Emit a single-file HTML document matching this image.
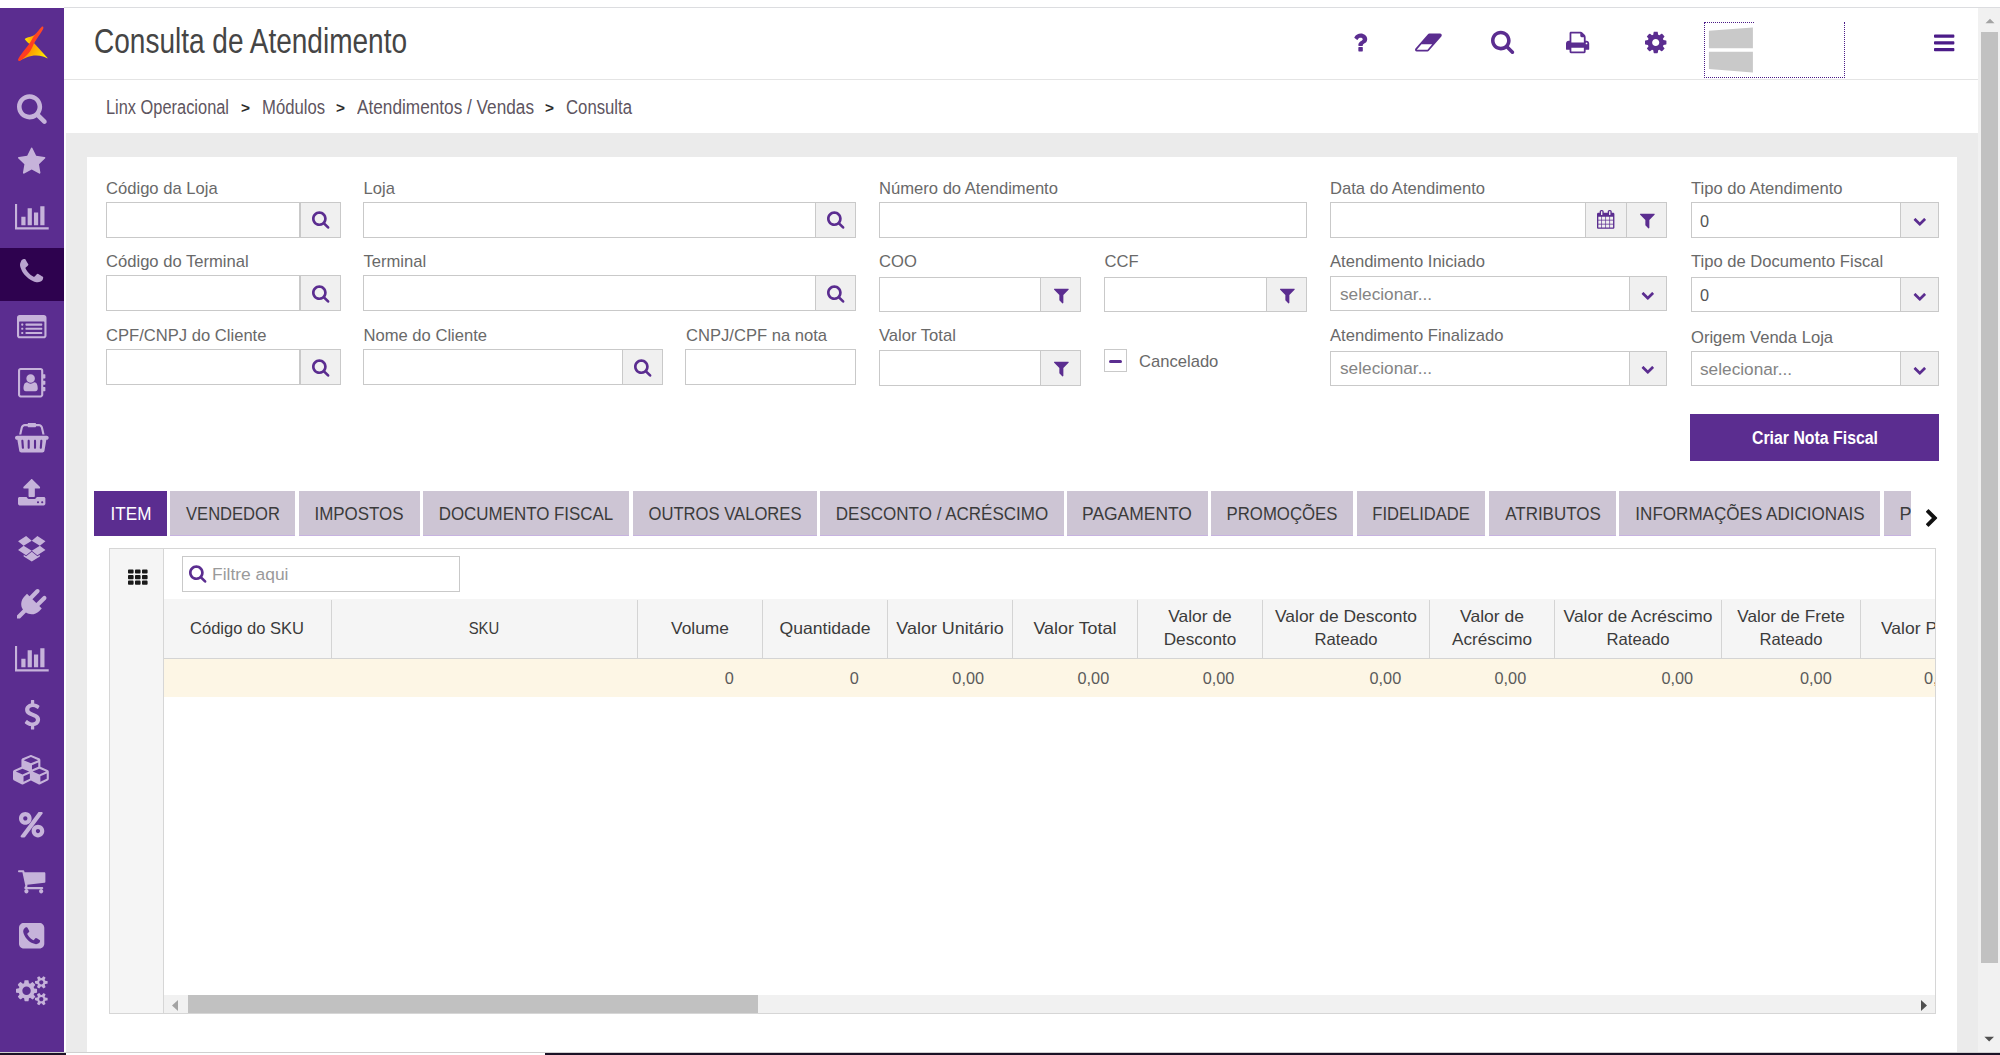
<!DOCTYPE html>
<html lang="pt-BR"><head><meta charset="utf-8"><title>Consulta de Atendimento</title>
<style>
*{box-sizing:border-box;margin:0;padding:0}
html,body{width:2000px;height:1055px;overflow:hidden;background:#fff;font-family:"Liberation Sans",sans-serif;}
body{position:relative}
.abs,.t,.ic,.bx{position:absolute}
.t{white-space:nowrap;line-height:1;transform-origin:0 50%;display:block}
.ic{display:block;overflow:visible}
.lbl{color:#696969;font-size:16.6px}
.inp{position:absolute;background:#fff;border:1px solid #c9c9c9;height:35px}
.btn{position:absolute;background:#f0f0f0;border:1px solid #c9c9c9;height:35px}
.tab{position:absolute;top:491px;height:44.8px;background:#cdc5d4;border-bottom:1.6px solid #c7b3e0}
.tab.on{background:#5b2d90;border-bottom-color:#5b2d90}
.th{position:absolute;top:600px;height:57px;border-left:1px solid #d4d4d4}
</style></head><body>

<div class="bx" style="left:64px;top:7px;width:1936px;height:1px;background:#dcdde0"></div>
<div class="bx" style="left:0;top:8px;width:64px;height:1045px;background:#5b2d90"></div>
<div class="bx" style="left:0;top:247.5px;width:64px;height:53.7px;background:#2e024f"></div>
<svg class="ic" style="left:8px;top:16px;width:48px;height:56px" viewBox="0 0 48 56">
<defs><linearGradient id="lg1" x1="0" y1="1" x2="1" y2="0"><stop offset="0" stop-color="#ff3a22"/><stop offset="0.5" stop-color="#ff3d20"/><stop offset="1" stop-color="#ff4a26"/></linearGradient>
<linearGradient id="lg2" x1="0" y1="0" x2="1" y2="0"><stop offset="0" stop-color="#ffe600"/><stop offset="0.6" stop-color="#ffb000"/><stop offset="1" stop-color="#ff6a10"/></linearGradient>
<linearGradient id="lg3" x1="0" y1="0" x2="1" y2="0.35"><stop offset="0" stop-color="#ff4a18"/><stop offset="0.35" stop-color="#ff8a00"/><stop offset="0.8" stop-color="#ffc400"/><stop offset="1" stop-color="#ffe800"/></linearGradient></defs>
<path d="M16.7 22.9 C18.5 21.3 22 20.9 24.5 19.9 C26 19.2 27 18.5 28 17.4 L26 27.5 L22 28 C20.2 27 18 25 16.7 22.9Z" fill="url(#lg2)"/>
<path d="M25.5 26.5 L39.8 42.2 C38.5 42.6 37.5 41.4 35 40.6 C30 39 24 39.4 19 41.2 C16 42.4 13.5 43.8 11.5 44.6 L22 33Z" fill="url(#lg3)"/>
<path d="M34.6 10.6 C35.6 10.8 35.6 12.2 35 13.2 C32.5 17.5 28.5 23 26 27.3 C24.8 30 24 32.5 22 35.5 C19.5 39 15.5 42.5 12.3 44.7 C11 45.4 9.8 44.6 10.1 43.2 C12 39.5 17 33.5 21 28.2 C23 25.5 24.5 22 26.5 19.5 C29 16 32 12.6 33.6 10.9 C33.9 10.6 34.3 10.5 34.6 10.6Z" fill="url(#lg1)"/>
</svg>
<svg class="ic" style="left:17.14px;top:91.80px;width:29.71px;height:32.00px;" viewBox="0 0 1664 1792"><path fill="#c6b3da" d="M1152 832C1152 1079 951 1280 704 1280C457 1280 256 1079 256 832C256 585 457 384 704 384C951 384 1152 585 1152 832ZM1664 1664C1664 1630 1650 1597 1627 1574L1284 1231C1365 1114 1408 974 1408 832C1408 443 1093 128 704 128C315 128 0 443 0 832C0 1221 315 1536 704 1536C846 1536 986 1493 1103 1412L1446 1754C1469 1778 1502 1792 1536 1792C1606 1792 1664 1734 1664 1664Z"/></svg>
<svg class="ic" style="left:18.30px;top:146.60px;width:27.39px;height:29.50px;" viewBox="0 0 1664 1792"><path fill="#c6b3da" d="M1664 647C1664 617 1632 605 1608 601L1106 528L881 73C872 54 855 32 832 32C809 32 792 54 783 73L558 528L56 601C31 605 0 617 0 647C0 665 13 682 25 695L389 1049L303 1549C302 1556 301 1562 301 1569C301 1595 314 1619 343 1619C357 1619 370 1614 383 1607L832 1371L1281 1607C1293 1614 1307 1619 1321 1619C1350 1619 1362 1595 1362 1569C1362 1562 1362 1556 1361 1549L1275 1049L1638 695C1651 682 1664 665 1664 647Z"/></svg>
<svg class="ic" style="left:15.14px;top:201.90px;width:33.71px;height:29.50px;" viewBox="0 0 2048 1792"><path fill="#c6b3da" d="M640 896H384V1408H640ZM1024 384H768V1408H1024ZM2048 1536H128V128H0V1664H2048ZM1408 640H1152V1408H1408ZM1792 256H1536V1408H1792Z"/></svg>
<svg class="ic" style="left:20.41px;top:257.20px;width:23.18px;height:29.50px;" viewBox="0 0 1408 1792"><path fill="#b9a4cf" d="M1408 1240C1408 1233 1408 1226 1405 1219C1398 1198 1349 1176 1329 1166C1272 1134 1214 1103 1158 1070C1132 1054 1100 1024 1069 1024C1008 1024 919 1205 865 1205C838 1205 803 1180 779 1166C597 1065 471 939 370 757C356 733 331 698 331 671C331 617 512 528 512 467C512 436 482 404 466 378C433 322 402 264 370 207C360 187 338 138 317 131C310 128 303 128 296 128C260 128 190 144 157 159C108 180 76 236 51 281C19 340 0 400 0 467C0 560 38 644 69 729C91 790 118 849 152 904C257 1074 462 1279 632 1384C687 1418 746 1445 807 1467C892 1498 976 1536 1069 1536C1136 1536 1196 1517 1255 1485C1300 1460 1356 1428 1377 1379C1392 1346 1408 1276 1408 1240Z"/></svg>
<svg class="ic" style="left:17.25px;top:312.50px;width:29.50px;height:29.50px;" viewBox="0 0 1792 1792"><path fill="#c6b3da" d="M384 1184C384 1167 369 1152 352 1152H288C271 1152 256 1167 256 1184V1248C256 1265 271 1280 288 1280H352C369 1280 384 1265 384 1248ZM384 928C384 911 369 896 352 896H288C271 896 256 911 256 928V992C256 1009 271 1024 288 1024H352C369 1024 384 1009 384 992ZM384 672C384 655 369 640 352 640H288C271 640 256 655 256 672V736C256 753 271 768 288 768H352C369 768 384 753 384 736ZM1536 1184C1536 1167 1521 1152 1504 1152H544C527 1152 512 1167 512 1184V1248C512 1265 527 1280 544 1280H1504C1521 1280 1536 1265 1536 1248ZM1536 928C1536 911 1521 896 1504 896H544C527 896 512 911 512 928V992C512 1009 527 1024 544 1024H1504C1521 1024 1536 1009 1536 992ZM1536 672C1536 655 1521 640 1504 640H544C527 640 512 655 512 672V736C512 753 527 768 544 768H1504C1521 768 1536 753 1536 736ZM1664 1376C1664 1393 1649 1408 1632 1408H160C143 1408 128 1393 128 1376V544C128 527 143 512 160 512H1632C1649 512 1664 527 1664 544V1376ZM1792 288C1792 200 1720 128 1632 128H160C72 128 0 200 0 288V1376C0 1464 72 1536 160 1536H1632C1720 1536 1792 1464 1792 1376Z"/></svg>
<svg class="ic" style="left:18.30px;top:367.80px;width:27.39px;height:29.50px;" viewBox="0 0 1664 1792"><path fill="#c6b3da" d="M1028 644C1028 500 911 384 768 384C625 384 508 500 508 644C508 787 625 903 768 903C911 903 1028 787 1028 644ZM980 864C914 903 847 951 768 951C689 951 622 903 556 864H551C365 864 335 1097 335 1238C335 1322 388 1408 480 1408H1056C1148 1408 1201 1322 1201 1238C1201 1091 1171 864 980 864ZM1664 608V416C1664 399 1649 384 1632 384H1536V160C1536 72 1464 0 1376 0H160C72 0 0 72 0 160V1632C0 1720 72 1792 160 1792H1376C1464 1792 1536 1720 1536 1632V1408H1632C1649 1408 1664 1393 1664 1376V1184C1664 1167 1649 1152 1632 1152H1536V1024H1632C1649 1024 1664 1009 1664 992V800C1664 783 1649 768 1632 768H1536V640H1632C1649 640 1664 625 1664 608ZM1408 1632C1408 1649 1393 1664 1376 1664H160C143 1664 128 1649 128 1632V160C128 143 143 128 160 128H1376C1393 128 1408 143 1408 160Z"/></svg>
<svg class="ic" style="left:15.14px;top:423.10px;width:33.71px;height:29.50px;" viewBox="0 0 2048 1792"><path fill="#c6b3da" d="M1920 768H128C57 768 0 825 0 896C0 967 57 1024 128 1024H143L258 1686C269 1747 322 1792 384 1792H1664C1726 1792 1779 1747 1790 1686L1905 1024H1920C1991 1024 2048 967 2048 896C2048 825 1991 768 1920 768ZM485 1568C483 1568 482 1568 480 1568C447 1568 419 1542 416 1509L384 1093C381 1058 408 1027 443 1024C478 1021 509 1048 512 1083L544 1499C547 1534 520 1565 485 1568ZM896 1504C896 1539 867 1568 832 1568C797 1568 768 1539 768 1504V1088C768 1053 797 1024 832 1024C867 1024 896 1053 896 1088ZM1280 1504C1280 1539 1251 1568 1216 1568C1181 1568 1152 1539 1152 1504V1088C1152 1053 1181 1024 1216 1024C1251 1024 1280 1053 1280 1088ZM1632 1509C1629 1542 1601 1568 1568 1568C1566 1568 1565 1568 1563 1568C1528 1565 1501 1534 1504 1499L1536 1083C1539 1048 1570 1021 1605 1024C1640 1027 1667 1058 1664 1093ZM476 292C490 233 541 192 601 192H768C768 227 797 256 832 256H1216C1251 256 1280 227 1280 192H1447C1507 192 1558 233 1572 292L1665 704H1797L1696 263C1670 146 1567 64 1447 64H1280C1280 29 1251 0 1216 0H832C797 0 768 29 768 64H601C481 64 378 146 352 263L251 704H383Z"/></svg>
<svg class="ic" style="left:18.30px;top:478.40px;width:27.39px;height:29.50px;" viewBox="0 0 1664 1792"><path fill="#c6b3da" d="M1280 1472C1280 1507 1251 1536 1216 1536C1181 1536 1152 1507 1152 1472C1152 1437 1181 1408 1216 1408C1251 1408 1280 1437 1280 1472ZM1536 1472C1536 1507 1507 1536 1472 1536C1437 1536 1408 1507 1408 1472C1408 1437 1437 1408 1472 1408C1507 1408 1536 1437 1536 1472ZM1664 1248C1664 1195 1621 1152 1568 1152H1141C1114 1226 1043 1280 960 1280H704C621 1280 550 1226 523 1152H96C43 1152 0 1195 0 1248V1568C0 1621 43 1664 96 1664H1568C1621 1664 1664 1621 1664 1568ZM1339 600C1349 577 1344 549 1325 531L877 83C865 70 848 64 832 64C816 64 799 70 787 83L339 531C320 549 315 577 325 600C335 624 358 640 384 640H640V1088C640 1123 669 1152 704 1152H960C995 1152 1024 1123 1024 1088V640H1280C1306 640 1329 624 1339 600Z"/></svg>
<svg class="ic" style="left:17.25px;top:533.70px;width:29.50px;height:29.50px;" viewBox="0 0 1792 1792"><path fill="#c6b3da" d="M402 707 64 978 554 1297 896 1012ZM1388 1262 1241 1358 898 1074V1072L897 1073L896 1072V1074L554 1358L407 1262V1370L896 1663V1664L897 1663L898 1664V1663L1388 1370ZM554 118 64 437 402 707 896 403ZM1390 707 896 1012 1239 1297 1728 978ZM1239 118 896 403 1390 707 1728 437Z"/></svg>
<svg class="ic" style="left:17.25px;top:589.00px;width:29.50px;height:29.50px;" viewBox="0 0 1792 1792"><path fill="#c6b3da" d="M1755 453C1705 403 1624 403 1574 453L1173 853L939 619L1339 218C1389 169 1389 87 1339 37C1289 -12 1208 -12 1158 37L758 438L608 288L448 448C229 667 198 1001 362 1249L0 1611V1792H181L543 1430C791 1594 1125 1563 1344 1344L1504 1184L1354 1034L1755 634C1804 584 1804 503 1755 453Z"/></svg>
<svg class="ic" style="left:15.14px;top:644.30px;width:33.71px;height:29.50px;" viewBox="0 0 2048 1792"><path fill="#c6b3da" d="M640 896H384V1408H640ZM1024 384H768V1408H1024ZM2048 1536H128V128H0V1664H2048ZM1408 640H1152V1408H1408ZM1792 256H1536V1408H1792Z"/></svg>
<svg class="ic" style="left:23.57px;top:699.60px;width:16.86px;height:29.50px;" viewBox="0 0 1024 1792"><path fill="#c6b3da" d="M978 1185C978 944 770 863 586 792C444 737 322 690 322 584C322 493 410 430 537 430C687 430 808 537 809 538C817 544 826 547 836 545C846 544 854 538 859 529L940 383C947 371 945 356 935 345C931 341 823 231 620 208V32C620 14 606 0 588 0H453C436 0 421 14 421 32V212C212 252 68 404 68 588C68 839 292 929 472 1000C607 1054 725 1101 725 1197C725 1310 619 1362 521 1362C344 1362 204 1228 202 1227C196 1220 187 1217 178 1218C169 1219 160 1223 155 1230L52 1365C43 1377 44 1394 54 1406C59 1412 187 1552 421 1585V1760C421 1778 436 1792 453 1792H588C606 1792 620 1778 620 1760V1585C832 1550 978 1389 978 1185Z"/></svg>
<svg class="ic" style="left:13.04px;top:754.90px;width:37.93px;height:29.50px;" viewBox="0 0 2304 1792"><path fill="#c6b3da" d="M640 1632V1290L1024 1126V1440ZM576 1178 172 1005 576 832 980 1005ZM1664 1632V1290L2048 1126V1440ZM1600 1178 1196 1005 1600 832 2004 1005ZM1152 885V618L1536 454V720ZM1088 506 647 317 1088 128 1529 317ZM2176 1024C2176 973 2146 927 2098 906L1664 720V320C1664 269 1633 223 1586 202L1138 10C1122 3 1105 0 1088 0C1071 0 1054 3 1038 10L590 202C543 223 512 269 512 320V720L78 906C31 927 0 973 0 1024V1440C0 1488 27 1533 71 1554L519 1778C537 1788 556 1792 576 1792C596 1792 615 1788 633 1778L1081 1554C1084 1553 1086 1552 1088 1550C1090 1552 1092 1553 1095 1554L1543 1778C1561 1788 1580 1792 1600 1792C1620 1792 1639 1788 1657 1778L2105 1554C2149 1533 2176 1488 2176 1440Z"/></svg>
<svg class="ic" style="left:19.36px;top:810.20px;width:25.29px;height:29.50px;" viewBox="0 0 1536 1792"><path fill="#c6b3da" d="M1280 1280C1280 1350 1222 1408 1152 1408C1082 1408 1024 1350 1024 1280C1024 1210 1082 1152 1152 1152C1222 1152 1280 1210 1280 1280ZM512 512C512 582 454 640 384 640C314 640 256 582 256 512C256 442 314 384 384 384C454 384 512 442 512 512ZM1536 1280C1536 1068 1364 896 1152 896C940 896 768 1068 768 1280C768 1492 940 1664 1152 1664C1364 1664 1536 1492 1536 1280ZM1440 192C1440 157 1411 128 1376 128H1216C1196 128 1177 138 1165 154L109 1562C101 1573 96 1586 96 1600C96 1635 125 1664 160 1664H320C340 1664 359 1654 371 1638L1427 230C1435 219 1440 206 1440 192ZM768 512C768 300 596 128 384 128C172 128 0 300 0 512C0 724 172 896 384 896C596 896 768 724 768 512Z"/></svg>
<svg class="ic" style="left:18.30px;top:865.50px;width:27.39px;height:29.50px;" viewBox="0 0 1664 1792"><path fill="#c6b3da" d="M640 1536C640 1466 582 1408 512 1408C442 1408 384 1466 384 1536C384 1606 442 1664 512 1664C582 1664 640 1606 640 1536ZM1536 1536C1536 1466 1478 1408 1408 1408C1338 1408 1280 1466 1280 1536C1280 1606 1338 1664 1408 1664C1478 1664 1536 1606 1536 1536ZM1664 448C1664 413 1635 384 1600 384H399C389 336 387 256 320 256H64C29 256 0 285 0 320C0 355 29 384 64 384H268L445 1207C429 1238 384 1313 384 1344C384 1379 413 1408 448 1408H1472C1507 1408 1536 1379 1536 1344C1536 1309 1507 1280 1472 1280H552C562 1260 576 1239 576 1216C576 1192 568 1169 563 1146L1607 1024C1639 1020 1664 992 1664 960Z"/></svg>
<svg class="ic" style="left:19.36px;top:920.80px;width:25.29px;height:29.50px;" viewBox="0 0 1536 1792"><path fill="#c6b3da" d="M1280 1193C1280 1219 1268 1270 1258 1294C1228 1360 1102 1408 1033 1408C966 1408 905 1381 843 1358C624 1278 386 1040 306 821C283 759 256 698 256 631C256 562 304 436 370 406C394 396 445 384 471 384C476 384 482 384 487 386C505 392 579 538 595 566C606 585 628 608 628 631C628 675 497 740 497 779C497 799 515 824 525 842C599 974 690 1065 822 1139C840 1149 865 1167 885 1167C924 1167 989 1036 1033 1036C1056 1036 1079 1058 1098 1069C1126 1085 1272 1159 1278 1177C1280 1182 1280 1188 1280 1193ZM1536 416C1536 257 1407 128 1248 128H288C129 128 0 257 0 416V1376C0 1535 129 1664 288 1664H1248C1407 1664 1536 1535 1536 1376Z"/></svg>
<svg class="ic" style="left:16.20px;top:976.10px;width:31.61px;height:29.50px;" viewBox="0 0 1920 1792"><path fill="#c6b3da" d="M896 896C896 1037 781 1152 640 1152C499 1152 384 1037 384 896C384 755 499 640 640 640C781 640 896 755 896 896ZM1664 1408C1664 1478 1607 1536 1536 1536C1466 1536 1408 1479 1408 1408C1408 1338 1466 1280 1536 1280C1606 1280 1664 1338 1664 1408ZM1664 384C1664 454 1607 512 1536 512C1466 512 1408 455 1408 384C1408 314 1466 256 1536 256C1606 256 1664 314 1664 384ZM1280 805C1280 791 1270 778 1256 775L1104 752C1095 724 1083 697 1070 670C1098 631 1128 595 1157 556C1161 550 1164 544 1164 537C1164 509 1046 401 1020 377C1014 372 1007 369 999 369C992 369 985 371 979 376L861 465C837 453 812 442 786 434L763 281C761 267 747 256 733 256H547C533 256 521 266 517 280C504 329 499 384 494 434C467 443 442 453 417 466L302 376C296 372 289 369 281 369C252 369 140 490 120 517C115 523 113 530 113 537C113 544 116 551 120 557C152 595 182 632 210 672C197 697 186 722 178 748L23 772C10 774 0 789 0 802V987C0 1001 10 1014 24 1016L176 1040C185 1068 197 1095 211 1122C182 1161 152 1198 123 1236C119 1242 116 1248 116 1255C116 1284 234 1391 260 1415C266 1420 273 1423 281 1423C288 1423 296 1421 301 1416L419 1327C443 1339 468 1350 494 1358L517 1511C519 1525 533 1536 547 1536H733C747 1536 759 1526 763 1512C776 1463 781 1408 786 1357C813 1349 838 1339 863 1326L978 1416C984 1420 991 1423 999 1423C1028 1423 1140 1301 1160 1274C1165 1269 1167 1262 1167 1255C1167 1247 1164 1241 1160 1235C1128 1197 1098 1160 1070 1120C1083 1095 1094 1070 1102 1044L1257 1020C1270 1018 1280 1003 1280 990ZM1920 1338C1920 1323 1791 1309 1771 1307C1763 1289 1753 1271 1741 1255C1750 1235 1792 1135 1792 1117C1792 1115 1791 1112 1788 1110C1776 1103 1669 1040 1664 1040L1658 1042C1624 1076 1594 1115 1566 1154C1556 1153 1546 1152 1536 1152C1526 1152 1516 1153 1506 1154C1496 1139 1421 1040 1408 1040C1403 1040 1296 1104 1284 1110C1281 1112 1280 1115 1280 1117C1280 1134 1322 1235 1331 1255C1319 1271 1309 1289 1301 1307C1281 1309 1152 1323 1152 1338V1478C1152 1493 1281 1507 1301 1509C1309 1528 1319 1545 1331 1561C1322 1581 1280 1682 1280 1699C1280 1701 1281 1704 1284 1706C1296 1713 1403 1777 1408 1777C1421 1777 1496 1677 1506 1662C1516 1663 1526 1664 1536 1664C1546 1664 1556 1663 1566 1662C1576 1677 1651 1777 1664 1777C1669 1777 1776 1713 1788 1706C1791 1704 1792 1702 1792 1699C1792 1681 1750 1581 1741 1561C1753 1545 1763 1528 1771 1509C1791 1507 1920 1493 1920 1478ZM1920 314C1920 299 1791 285 1771 283C1763 265 1753 247 1741 231C1750 211 1792 111 1792 93C1792 91 1791 88 1788 86C1776 79 1669 16 1664 16L1658 18C1624 52 1594 91 1566 130C1556 129 1546 128 1536 128C1526 128 1516 129 1506 130C1496 115 1421 16 1408 16C1403 16 1296 80 1284 86C1281 88 1280 91 1280 93C1280 110 1322 211 1331 231C1319 247 1309 265 1301 283C1281 285 1152 299 1152 314V454C1152 469 1281 483 1301 485C1309 504 1319 521 1331 537C1322 557 1280 658 1280 675C1280 677 1281 680 1284 682C1296 689 1403 753 1408 753C1421 753 1496 653 1506 638C1516 639 1526 640 1536 640C1546 640 1556 639 1566 638C1576 653 1651 753 1664 753C1669 753 1776 689 1788 682C1791 680 1792 678 1792 675C1792 657 1750 557 1741 537C1753 521 1763 504 1771 485C1791 483 1920 469 1920 454Z"/></svg>
<div class="bx" style="left:1978px;top:8px;width:22px;height:1045px;background:#f1f1f1"></div>
<div class="bx" style="left:1980.8px;top:32px;width:17.6px;height:930.6px;background:#c1c1c1"></div>
<svg class="ic" style="left:1984.6px;top:17.6px;width:10px;height:6px" viewBox="0 0 12 8"><path d="M0 7 L6 1 L12 7Z" fill="#a3a3a3"/></svg>
<svg class="ic" style="left:1984.4px;top:1036.4px;width:10.4px;height:6.4px" viewBox="0 0 12 8"><path d="M0 1 L6 7 L12 1Z" fill="#505050"/></svg>
<div class="bx" style="left:0;top:1052px;width:2000px;height:1px;background:#d0d0d0"></div>
<div class="bx" style="left:0;top:1053px;width:66px;height:2px;background:#1b1226"></div>
<div class="bx" style="left:545px;top:1053px;width:1455px;height:2px;background:#1b1226"></div>
<div class="bx" style="left:64px;top:79px;width:1914px;height:1px;background:#e4e4e4"></div>
<span class="t " id="title" style="left:94px;top:23px;font-size:35px;color:#454545;transform:scaleX(0.8003);">Consulta de Atendimento</span>
<svg class="ic" style="left:1353.42px;top:29.90px;width:14.29px;height:25.00px;" viewBox="0 0 1024 1792"><path fill="#5b2d90" d="M704 1256C704 1234 686 1216 664 1216H424C402 1216 384 1234 384 1256V1496C384 1518 402 1536 424 1536H664C686 1536 704 1518 704 1496ZM1020 656C1020 427 780 256 566 256C362 256 210 343 102 522C91 540 95 562 112 575L276 700C284 705 292 708 301 708C312 708 324 702 332 692C391 618 415 594 439 577C461 562 502 548 547 548C628 548 701 598 701 654C701 718 669 751 592 786C504 826 384 930 384 1051V1096C384 1118 398 1152 420 1152H660C683 1152 700 1126 700 1104C700 1075 737 1006 796 972C891 919 1020 846 1020 656Z"/></svg>
<svg class="ic" style="left:1415.11px;top:29.90px;width:26.79px;height:25.00px;" viewBox="0 0 1920 1792"><path fill="#5b2d90" d="M896 1408H128L464 1024H1232ZM1909 331C1888 285 1842 256 1792 256H1024C987 256 952 272 928 300L32 1324C-1 1362 -9 1415 11 1461C32 1507 78 1536 128 1536H896C933 1536 968 1520 992 1492L1888 468C1921 430 1929 377 1909 331Z"/></svg>
<svg class="ic" style="left:1490.89px;top:29.01px;width:23.21px;height:25.00px;" viewBox="0 0 1664 1792"><path fill="#5b2d90" d="M1152 832C1152 1079 951 1280 704 1280C457 1280 256 1079 256 832C256 585 457 384 704 384C951 384 1152 585 1152 832ZM1664 1664C1664 1630 1650 1597 1627 1574L1284 1231C1365 1114 1408 974 1408 832C1408 443 1093 128 704 128C315 128 0 443 0 832C0 1221 315 1536 704 1536C846 1536 986 1493 1103 1412L1446 1754C1469 1778 1502 1792 1536 1792C1606 1792 1664 1734 1664 1664Z"/></svg>
<svg class="ic" style="left:1566.39px;top:29.90px;width:23.21px;height:25.00px;" viewBox="0 0 1664 1792"><path fill="#5b2d90" d="M384 1536V1280H1280V1536ZM384 896V256H1024V416C1024 469 1067 512 1120 512H1280V896ZM1536 960C1536 995 1507 1024 1472 1024C1437 1024 1408 995 1408 960C1408 925 1437 896 1472 896C1507 896 1536 925 1536 960ZM1664 960C1664 855 1577 768 1472 768H1408V512C1408 459 1378 386 1340 348L1188 196C1150 158 1077 128 1024 128H352C299 128 256 171 256 224V768H192C87 768 0 855 0 960V1376C0 1393 15 1408 32 1408H256V1568C256 1621 299 1664 352 1664H1312C1365 1664 1408 1621 1408 1568V1408H1632C1649 1408 1664 1393 1664 1376Z"/></svg>
<svg class="ic" style="left:1644.79px;top:29.90px;width:21.43px;height:25.00px;" viewBox="0 0 1536 1792"><path fill="#5b2d90" d="M1024 896C1024 1037 909 1152 768 1152C627 1152 512 1037 512 896C512 755 627 640 768 640C909 640 1024 755 1024 896ZM1536 787C1536 770 1524 754 1507 751L1324 723C1314 690 1300 657 1283 625C1317 578 1354 534 1388 488C1393 481 1396 474 1396 465C1396 457 1394 449 1389 443C1347 384 1277 322 1224 273C1217 267 1208 263 1199 263C1190 263 1181 266 1175 272L1033 379C1004 364 974 352 943 342L915 158C913 141 897 128 879 128H657C639 128 625 140 621 156C605 216 599 281 592 342C561 352 530 365 501 380L363 273C355 267 346 263 337 263C303 263 168 409 144 442C139 449 135 456 135 465C135 474 139 482 145 489C182 534 218 579 252 627C236 657 223 687 213 719L27 747C12 750 0 768 0 783V1005C0 1022 12 1038 29 1041L212 1068C222 1102 236 1135 253 1167C219 1214 182 1258 148 1304C143 1311 140 1318 140 1327C140 1335 142 1343 147 1350C189 1408 259 1470 312 1518C319 1525 328 1529 337 1529C346 1529 355 1526 362 1520L503 1413C532 1428 562 1440 593 1450L621 1634C623 1651 639 1664 657 1664H879C897 1664 911 1652 915 1636C931 1576 937 1511 944 1450C975 1440 1006 1427 1035 1412L1173 1520C1181 1525 1190 1529 1199 1529C1233 1529 1368 1382 1392 1350C1398 1343 1401 1336 1401 1327C1401 1318 1397 1309 1391 1302C1354 1257 1318 1213 1284 1164C1300 1135 1312 1105 1323 1073L1508 1045C1524 1042 1536 1024 1536 1009Z"/></svg>
<svg class="ic" style="left:1933.62px;top:31.12px;width:20.36px;height:23.75px;" viewBox="0 0 1536 1792"><path fill="#4b1b88" d="M1536 1344C1536 1309 1507 1280 1472 1280H64C29 1280 0 1309 0 1344V1472C0 1507 29 1536 64 1536H1472C1507 1536 1536 1507 1536 1472ZM1536 832C1536 797 1507 768 1472 768H64C29 768 0 797 0 832V960C0 995 29 1024 64 1024H1472C1507 1024 1536 995 1536 960ZM1536 320C1536 285 1507 256 1472 256H64C29 256 0 285 0 320V448C0 483 29 512 64 512H1472C1507 512 1536 483 1536 448Z"/></svg>
<div class="bx" style="left:1704px;top:22px;width:141px;height:56px;border:1px dotted #4b1b88;border-top:none"></div>
<div class="bx" style="left:1704px;top:22px;width:49.5px;height:10px;border-top:1px dotted #4b1b88"></div>
<svg class="ic" style="left:1700px;top:20px;width:60px;height:60px" viewBox="0 0 60 60"><path d="M8.9 10.8 L52.9 7.4 L52.9 28.3 L8.9 28.3Z M8.9 31.7 L52.9 31.7 L52.9 52.5 L8.9 49.1Z" fill="#c9c9c9"/></svg>
<span class="t " id="bc1" style="left:106px;top:97px;font-size:20px;color:#5e5560;transform:scaleX(0.8195);">Linx Operacional</span>
<span class="t " id="bc2" style="left:262px;top:97px;font-size:20px;color:#5e5560;transform:scaleX(0.8332);">Módulos</span>
<span class="t " id="bc3" style="left:357px;top:97px;font-size:20px;color:#5e5560;transform:scaleX(0.8605);">Atendimentos / Vendas</span>
<span class="t " id="bc4" style="left:566px;top:97px;font-size:20px;color:#5e5560;transform:scaleX(0.8361);">Consulta</span>
<span class="t " id="gt1" style="left:241px;top:100px;font-size:15px;color:#2a2a2a;font-weight:bold;transform:scaleX(1.0267);">&gt;</span>
<span class="t " id="gt2" style="left:336px;top:100px;font-size:15px;color:#2a2a2a;font-weight:bold;transform:scaleX(1.0267);">&gt;</span>
<span class="t " id="gt3" style="left:545px;top:100px;font-size:15px;color:#2a2a2a;font-weight:bold;transform:scaleX(1.0267);">&gt;</span>
<div class="bx" style="left:66px;top:133px;width:1912px;height:919px;background:#ebebeb"></div>
<div class="bx" style="left:87px;top:157px;width:1870px;height:895px;background:#fff"></div>
<span class="t lbl" id="l1" style="left:106px;top:180.8px">Código da Loja</span>
<div class="inp" style="left:105.6px;top:201.7px;width:194.9px;height:36px"></div><div class="btn" style="left:299.5px;top:201.7px;width:41.2px;height:36px"></div><svg class="ic" style="left:311.89px;top:210.26px;width:17.41px;height:18.75px;" viewBox="0 0 1664 1792"><path fill="#5b2d90" d="M1152 832C1152 1079 951 1280 704 1280C457 1280 256 1079 256 832C256 585 457 384 704 384C951 384 1152 585 1152 832ZM1664 1664C1664 1630 1650 1597 1627 1574L1284 1231C1365 1114 1408 974 1408 832C1408 443 1093 128 704 128C315 128 0 443 0 832C0 1221 315 1536 704 1536C846 1536 986 1493 1103 1412L1446 1754C1469 1778 1502 1792 1536 1792C1606 1792 1664 1734 1664 1664Z"/></svg>
<span class="t lbl" id="l2" style="left:363.5px;top:180.8px">Loja</span>
<div class="inp" style="left:363px;top:201.7px;width:452.79999999999995px;height:36px"></div><div class="btn" style="left:814.8px;top:201.7px;width:41.2px;height:36px"></div><svg class="ic" style="left:827.19px;top:210.26px;width:17.41px;height:18.75px;" viewBox="0 0 1664 1792"><path fill="#5b2d90" d="M1152 832C1152 1079 951 1280 704 1280C457 1280 256 1079 256 832C256 585 457 384 704 384C951 384 1152 585 1152 832ZM1664 1664C1664 1630 1650 1597 1627 1574L1284 1231C1365 1114 1408 974 1408 832C1408 443 1093 128 704 128C315 128 0 443 0 832C0 1221 315 1536 704 1536C846 1536 986 1493 1103 1412L1446 1754C1469 1778 1502 1792 1536 1792C1606 1792 1664 1734 1664 1664Z"/></svg>
<span class="t lbl" id="l3" style="left:879px;top:180.8px">Número do Atendimento</span>
<div class="inp" style="left:878.6px;top:201.7px;width:428.80000000000007px;height:36px"></div>
<span class="t lbl" id="l4" style="left:1330px;top:180.8px">Data do Atendimento</span>
<div class="inp" style="left:1330.2px;top:201.7px;width:256.0px;height:36px"></div><div class="btn" style="left:1585.2px;top:201.7px;width:41.9px;height:36px"></div><svg class="ic" style="left:1597.44px;top:210.42px;width:17.41px;height:18.75px;" viewBox="0 0 1664 1792"><path fill="#5b2d90" d="M128 1664V1376H416V1664ZM480 1664V1376H800V1664ZM128 1312V992H416V1312ZM480 1312V992H800V1312ZM128 928V640H416V928ZM864 1664V1376H1184V1664ZM480 928V640H800V928ZM1248 1664V1376H1536V1664ZM864 1312V992H1184V1312ZM512 448C512 465 497 480 480 480H416C399 480 384 465 384 448V160C384 143 399 128 416 128H480C497 128 512 143 512 160V448ZM1248 1312V992H1536V1312ZM864 928V640H1184V928ZM1248 928V640H1536V928ZM1280 448C1280 465 1265 480 1248 480H1184C1167 480 1152 465 1152 448V160C1152 143 1167 128 1184 128H1248C1265 128 1280 143 1280 160V448ZM1664 384C1664 314 1606 256 1536 256H1408V160C1408 72 1336 0 1248 0H1184C1096 0 1024 72 1024 160V256H640V160C640 72 568 0 480 0H416C328 0 256 72 256 160V256H128C58 256 0 314 0 384V1664C0 1734 58 1792 128 1792H1536C1606 1792 1664 1734 1664 1664Z"/></svg><div class="btn" style="left:1626.1000000000001px;top:201.7px;width:40.9px;height:36px"></div><svg class="ic" style="left:1639.68px;top:210.76px;width:14.73px;height:18.75px;" viewBox="0 0 1408 1792"><path fill="#5b2d90" d="M1403 295C1393 272 1370 256 1344 256H64C38 256 15 272 5 295C-5 319 0 347 19 365L512 858V1344C512 1361 519 1377 531 1389L787 1645C799 1658 815 1664 832 1664C840 1664 849 1662 857 1659C880 1649 896 1626 896 1600V858L1389 365C1408 347 1413 319 1403 295Z"/></svg>
<span class="t lbl" id="l5" style="left:1691px;top:180.8px">Tipo do Atendimento</span>
<div class="inp" style="left:1690.6px;top:201.7px;width:210.70000000000005px;height:36px"></div><div class="btn" style="left:1900.3px;top:201.7px;width:38.4px;height:36px"></div><svg class="ic" style="left:1912.90px;top:213.93px;width:13.60px;height:13.60px;" viewBox="0 0 1792 1792"><path fill="#5b2d90" d="M1683 808C1708 783 1708 742 1683 717L1517 552C1492 527 1452 527 1427 552L896 1083L365 552C340 527 300 527 275 552L109 717C84 742 84 783 109 808L851 1549C876 1574 916 1574 941 1549L1683 808Z"/></svg>
<span class="t " id="v5" style="left:1700px;top:212.5px;font-size:16.25px;color:#555;">0</span>
<span class="t lbl" id="l6" style="left:106px;top:254.4px">Código do Terminal</span>
<div class="inp" style="left:105.6px;top:275.4px;width:194.9px;height:36px"></div><div class="btn" style="left:299.5px;top:275.4px;width:41.2px;height:36px"></div><svg class="ic" style="left:311.89px;top:283.96px;width:17.41px;height:18.75px;" viewBox="0 0 1664 1792"><path fill="#5b2d90" d="M1152 832C1152 1079 951 1280 704 1280C457 1280 256 1079 256 832C256 585 457 384 704 384C951 384 1152 585 1152 832ZM1664 1664C1664 1630 1650 1597 1627 1574L1284 1231C1365 1114 1408 974 1408 832C1408 443 1093 128 704 128C315 128 0 443 0 832C0 1221 315 1536 704 1536C846 1536 986 1493 1103 1412L1446 1754C1469 1778 1502 1792 1536 1792C1606 1792 1664 1734 1664 1664Z"/></svg>
<span class="t lbl" id="l7" style="left:363.5px;top:254.4px">Terminal</span>
<div class="inp" style="left:363px;top:275.4px;width:452.79999999999995px;height:36px"></div><div class="btn" style="left:814.8px;top:275.4px;width:41.2px;height:36px"></div><svg class="ic" style="left:827.19px;top:283.96px;width:17.41px;height:18.75px;" viewBox="0 0 1664 1792"><path fill="#5b2d90" d="M1152 832C1152 1079 951 1280 704 1280C457 1280 256 1079 256 832C256 585 457 384 704 384C951 384 1152 585 1152 832ZM1664 1664C1664 1630 1650 1597 1627 1574L1284 1231C1365 1114 1408 974 1408 832C1408 443 1093 128 704 128C315 128 0 443 0 832C0 1221 315 1536 704 1536C846 1536 986 1493 1103 1412L1446 1754C1469 1778 1502 1792 1536 1792C1606 1792 1664 1734 1664 1664Z"/></svg>
<span class="t lbl" id="l8" style="left:879px;top:254.4px">COO</span>
<div class="inp" style="left:878.6px;top:277.0px;width:162.69999999999993px;height:35.3px"></div><div class="btn" style="left:1040.3px;top:277.0px;width:41.2px;height:35.3px"></div><svg class="ic" style="left:1054.03px;top:285.71px;width:14.73px;height:18.75px;" viewBox="0 0 1408 1792"><path fill="#5b2d90" d="M1403 295C1393 272 1370 256 1344 256H64C38 256 15 272 5 295C-5 319 0 347 19 365L512 858V1344C512 1361 519 1377 531 1389L787 1645C799 1658 815 1664 832 1664C840 1664 849 1662 857 1659C880 1649 896 1626 896 1600V858L1389 365C1408 347 1413 319 1403 295Z"/></svg>
<span class="t lbl" id="l9" style="left:1104.5px;top:254.4px">CCF</span>
<div class="inp" style="left:1104px;top:277.0px;width:163.20000000000005px;height:35.3px"></div><div class="btn" style="left:1266.2px;top:277.0px;width:41.2px;height:35.3px"></div><svg class="ic" style="left:1279.93px;top:285.71px;width:14.73px;height:18.75px;" viewBox="0 0 1408 1792"><path fill="#5b2d90" d="M1403 295C1393 272 1370 256 1344 256H64C38 256 15 272 5 295C-5 319 0 347 19 365L512 858V1344C512 1361 519 1377 531 1389L787 1645C799 1658 815 1664 832 1664C840 1664 849 1662 857 1659C880 1649 896 1626 896 1600V858L1389 365C1408 347 1413 319 1403 295Z"/></svg>
<span class="t lbl" id="l10" style="left:1330px;top:254.4px">Atendimento Iniciado</span>
<div class="inp" style="left:1330.2px;top:276.0px;width:299.39999999999986px;height:35.4px"></div><div class="btn" style="left:1628.6px;top:276.0px;width:38.4px;height:35.4px"></div><svg class="ic" style="left:1641.20px;top:287.93px;width:13.60px;height:13.60px;" viewBox="0 0 1792 1792"><path fill="#5b2d90" d="M1683 808C1708 783 1708 742 1683 717L1517 552C1492 527 1452 527 1427 552L896 1083L365 552C340 527 300 527 275 552L109 717C84 742 84 783 109 808L851 1549C876 1574 916 1574 941 1549L1683 808Z"/></svg>
<span class="t " id="v10" style="left:1340px;top:286px;font-size:16.25px;color:#848484;transform:scaleX(1.0609);">selecionar...</span>
<span class="t lbl" id="l11" style="left:1691px;top:254.4px">Tipo de Documento Fiscal</span>
<div class="inp" style="left:1690.6px;top:277.0px;width:210.70000000000005px;height:35.4px"></div><div class="btn" style="left:1900.3px;top:277.0px;width:38.4px;height:35.4px"></div><svg class="ic" style="left:1912.90px;top:288.93px;width:13.60px;height:13.60px;" viewBox="0 0 1792 1792"><path fill="#5b2d90" d="M1683 808C1708 783 1708 742 1683 717L1517 552C1492 527 1452 527 1427 552L896 1083L365 552C340 527 300 527 275 552L109 717C84 742 84 783 109 808L851 1549C876 1574 916 1574 941 1549L1683 808Z"/></svg>
<span class="t " id="v11" style="left:1700px;top:287px;font-size:16.25px;color:#555;">0</span>
<span class="t lbl" id="l12" style="left:106px;top:328px">CPF/CNPJ do Cliente</span>
<div class="inp" style="left:105.6px;top:349.1px;width:194.9px;height:36px"></div><div class="btn" style="left:299.5px;top:349.1px;width:41.2px;height:36px"></div><svg class="ic" style="left:311.89px;top:357.66px;width:17.41px;height:18.75px;" viewBox="0 0 1664 1792"><path fill="#5b2d90" d="M1152 832C1152 1079 951 1280 704 1280C457 1280 256 1079 256 832C256 585 457 384 704 384C951 384 1152 585 1152 832ZM1664 1664C1664 1630 1650 1597 1627 1574L1284 1231C1365 1114 1408 974 1408 832C1408 443 1093 128 704 128C315 128 0 443 0 832C0 1221 315 1536 704 1536C846 1536 986 1493 1103 1412L1446 1754C1469 1778 1502 1792 1536 1792C1606 1792 1664 1734 1664 1664Z"/></svg>
<span class="t lbl" id="l13" style="left:363.5px;top:328px">Nome do Cliente</span>
<div class="inp" style="left:363px;top:349.1px;width:259.69999999999993px;height:36px"></div><div class="btn" style="left:621.6999999999999px;top:349.1px;width:41.2px;height:36px"></div><svg class="ic" style="left:634.09px;top:357.66px;width:17.41px;height:18.75px;" viewBox="0 0 1664 1792"><path fill="#5b2d90" d="M1152 832C1152 1079 951 1280 704 1280C457 1280 256 1079 256 832C256 585 457 384 704 384C951 384 1152 585 1152 832ZM1664 1664C1664 1630 1650 1597 1627 1574L1284 1231C1365 1114 1408 974 1408 832C1408 443 1093 128 704 128C315 128 0 443 0 832C0 1221 315 1536 704 1536C846 1536 986 1493 1103 1412L1446 1754C1469 1778 1502 1792 1536 1792C1606 1792 1664 1734 1664 1664Z"/></svg>
<span class="t lbl" id="l14" style="left:686px;top:328px">CNPJ/CPF na nota</span>
<div class="inp" style="left:685.3px;top:349.1px;width:170.70000000000005px;height:36px"></div>
<span class="t lbl" id="l15" style="left:879px;top:328px">Valor Total</span>
<div class="inp" style="left:878.6px;top:350.40000000000003px;width:162.69999999999993px;height:35.3px"></div><div class="btn" style="left:1040.3px;top:350.40000000000003px;width:41.2px;height:35.3px"></div><svg class="ic" style="left:1054.03px;top:359.11px;width:14.73px;height:18.75px;" viewBox="0 0 1408 1792"><path fill="#5b2d90" d="M1403 295C1393 272 1370 256 1344 256H64C38 256 15 272 5 295C-5 319 0 347 19 365L512 858V1344C512 1361 519 1377 531 1389L787 1645C799 1658 815 1664 832 1664C840 1664 849 1662 857 1659C880 1649 896 1626 896 1600V858L1389 365C1408 347 1413 319 1403 295Z"/></svg>
<span class="t lbl" id="l16" style="left:1330px;top:328px">Atendimento Finalizado</span>
<div class="inp" style="left:1330.2px;top:350.5px;width:299.39999999999986px;height:35.4px"></div><div class="btn" style="left:1628.6px;top:350.5px;width:38.4px;height:35.4px"></div><svg class="ic" style="left:1641.20px;top:362.43px;width:13.60px;height:13.60px;" viewBox="0 0 1792 1792"><path fill="#5b2d90" d="M1683 808C1708 783 1708 742 1683 717L1517 552C1492 527 1452 527 1427 552L896 1083L365 552C340 527 300 527 275 552L109 717C84 742 84 783 109 808L851 1549C876 1574 916 1574 941 1549L1683 808Z"/></svg>
<span class="t " id="v16" style="left:1340px;top:360px;font-size:16.25px;color:#848484;transform:scaleX(1.0609);">selecionar...</span>
<span class="t lbl" id="l17" style="left:1691px;top:329.7px">Origem Venda Loja</span>
<div class="inp" style="left:1690.6px;top:351.0px;width:210.70000000000005px;height:35.4px"></div><div class="btn" style="left:1900.3px;top:351.0px;width:38.4px;height:35.4px"></div><svg class="ic" style="left:1912.90px;top:362.93px;width:13.60px;height:13.60px;" viewBox="0 0 1792 1792"><path fill="#5b2d90" d="M1683 808C1708 783 1708 742 1683 717L1517 552C1492 527 1452 527 1427 552L896 1083L365 552C340 527 300 527 275 552L109 717C84 742 84 783 109 808L851 1549C876 1574 916 1574 941 1549L1683 808Z"/></svg>
<span class="t " id="v17" style="left:1700px;top:361px;font-size:16.25px;color:#848484;transform:scaleX(1.0609);">selecionar...</span>
<div class="bx" style="left:1103.6px;top:349.2px;width:23.3px;height:23.3px;border:1px solid #c9c9c9;background:#fff"></div>
<div class="bx" style="left:1109.2px;top:359.5px;width:12.4px;height:3.2px;border-radius:1.5px;background:#5b2d90"></div>
<span class="t lbl" id="l18" style="left:1139px;top:353.6px">Cancelado</span>
<div class="bx" style="left:1690.3px;top:414.4px;width:248.5px;height:47px;background:#5b2d90"></div>
<span class="t " id="btn" style="left:1814.5px;top:430px;font-size:17.5px;color:#fff;transform-origin:50% 50%;margin-left:-500px;width:1000px;text-align:center;font-weight:bold;transform:scaleX(0.9060);">Criar Nota Fiscal</span>
<div class="tab on" style="left:94.4px;width:72.29999999999998px"></div>
<span class="t " id="tab0" style="left:130.55px;top:504.5px;font-size:18px;color:#fff;transform-origin:50% 50%;margin-left:-500px;width:1000px;text-align:center;transform:scaleX(0.9488);">ITEM</span>
<div class="tab" style="left:170px;width:125.39999999999998px"></div>
<span class="t " id="tab1" style="left:232.7px;top:504.5px;font-size:18px;color:#3b3b3b;transform-origin:50% 50%;margin-left:-500px;width:1000px;text-align:center;transform:scaleX(0.9204);">VENDEDOR</span>
<div class="tab" style="left:299px;width:120.60000000000002px"></div>
<span class="t " id="tab2" style="left:359.3px;top:504.5px;font-size:18px;color:#3b3b3b;transform-origin:50% 50%;margin-left:-500px;width:1000px;text-align:center;transform:scaleX(0.9410);">IMPOSTOS</span>
<div class="tab" style="left:423px;width:206px"></div>
<span class="t " id="tab3" style="left:526.0px;top:504.5px;font-size:18px;color:#3b3b3b;transform-origin:50% 50%;margin-left:-500px;width:1000px;text-align:center;transform:scaleX(0.9398);">DOCUMENTO FISCAL</span>
<div class="tab" style="left:632.5px;width:184.5px"></div>
<span class="t " id="tab4" style="left:724.75px;top:504.5px;font-size:18px;color:#3b3b3b;transform-origin:50% 50%;margin-left:-500px;width:1000px;text-align:center;transform:scaleX(0.9233);">OUTROS VALORES</span>
<div class="tab" style="left:819.8px;width:244.0px"></div>
<span class="t " id="tab5" style="left:941.8px;top:504.5px;font-size:18px;color:#3b3b3b;transform-origin:50% 50%;margin-left:-500px;width:1000px;text-align:center;transform:scaleX(0.9457);">DESCONTO / ACRÉSCIMO</span>
<div class="tab" style="left:1066.6px;width:141.4000000000001px"></div>
<span class="t " id="tab6" style="left:1137.3px;top:504.5px;font-size:18px;color:#3b3b3b;transform-origin:50% 50%;margin-left:-500px;width:1000px;text-align:center;transform:scaleX(0.9695);">PAGAMENTO</span>
<div class="tab" style="left:1210.8px;width:142.4000000000001px"></div>
<span class="t " id="tab7" style="left:1282.0px;top:504.5px;font-size:18px;color:#3b3b3b;transform-origin:50% 50%;margin-left:-500px;width:1000px;text-align:center;transform:scaleX(0.9318);">PROMOÇÕES</span>
<div class="tab" style="left:1356.7px;width:128.79999999999995px"></div>
<span class="t " id="tab8" style="left:1421.1px;top:504.5px;font-size:18px;color:#3b3b3b;transform-origin:50% 50%;margin-left:-500px;width:1000px;text-align:center;transform:scaleX(0.9177);">FIDELIDADE</span>
<div class="tab" style="left:1489px;width:127px"></div>
<span class="t " id="tab9" style="left:1552.5px;top:504.5px;font-size:18px;color:#3b3b3b;transform-origin:50% 50%;margin-left:-500px;width:1000px;text-align:center;transform:scaleX(0.9422);">ATRIBUTOS</span>
<div class="tab" style="left:1619.2px;width:260.79999999999995px"></div>
<span class="t " id="tab10" style="left:1749.6px;top:504.5px;font-size:18px;color:#3b3b3b;transform-origin:50% 50%;margin-left:-500px;width:1000px;text-align:center;transform:scaleX(0.9473);">INFORMAÇÕES ADICIONAIS</span>
<div class="tab" style="left:1883.5px;width:27.5px;overflow:hidden"><span class="t" style="left:16px;top:13.5px;font-size:18px;color:#3b3b3b">PRODUTOS</span></div>
<svg class="ic" style="left:1925.18px;top:508.95px;width:13.93px;height:19.50px;" viewBox="0 0 1280 1792"><path fill="#111" d="M1107 877C1132 852 1132 812 1107 787L365 45C340 20 300 20 275 45L109 211C84 236 84 276 109 301L640 832L109 1363C84 1388 84 1428 109 1453L275 1619C300 1644 340 1644 365 1619L1107 877Z"/></svg>
<div class="bx" style="left:109px;top:548px;width:1827px;height:466px;border:1px solid #d6d6d6;background:#fff"></div>
<div class="bx" style="left:110px;top:549px;width:53.5px;height:464px;background:#f5f5f5;border-right:1px solid #d6d6d6"></div>
<svg class="ic" style="left:127.90px;top:567.80px;width:19.60px;height:19.60px;" viewBox="0 0 1792 1792"><path fill="#1a1a1a" d="M512 1248C512 1195 469 1152 416 1152H96C43 1152 0 1195 0 1248V1440C0 1493 43 1536 96 1536H416C469 1536 512 1493 512 1440ZM512 736C512 683 469 640 416 640H96C43 640 0 683 0 736V928C0 981 43 1024 96 1024H416C469 1024 512 981 512 928ZM1152 1248C1152 1195 1109 1152 1056 1152H736C683 1152 640 1195 640 1248V1440C640 1493 683 1536 736 1536H1056C1109 1536 1152 1493 1152 1440ZM512 224C512 171 469 128 416 128H96C43 128 0 171 0 224V416C0 469 43 512 96 512H416C469 512 512 469 512 416ZM1152 736C1152 683 1109 640 1056 640H736C683 640 640 683 640 736V928C640 981 683 1024 736 1024H1056C1109 1024 1152 981 1152 928ZM1792 1248C1792 1195 1749 1152 1696 1152H1376C1323 1152 1280 1195 1280 1248V1440C1280 1493 1323 1536 1376 1536H1696C1749 1536 1792 1493 1792 1440ZM1152 224C1152 171 1109 128 1056 128H736C683 128 640 171 640 224V416C640 469 683 512 736 512H1056C1109 512 1152 469 1152 416ZM1792 736C1792 683 1749 640 1696 640H1376C1323 640 1280 683 1280 736V928C1280 981 1323 1024 1376 1024H1696C1749 1024 1792 981 1792 928ZM1792 224C1792 171 1749 128 1696 128H1376C1323 128 1280 171 1280 224V416C1280 469 1323 512 1376 512H1696C1749 512 1792 469 1792 416Z"/></svg>
<div class="bx" style="left:182px;top:556px;width:278.4px;height:35.6px;border:1px solid #c9c9c9;background:#fff"></div>
<svg class="ic" style="left:189.29px;top:563.56px;width:17.41px;height:18.75px;" viewBox="0 0 1664 1792"><path fill="#5b2d90" d="M1152 832C1152 1079 951 1280 704 1280C457 1280 256 1079 256 832C256 585 457 384 704 384C951 384 1152 585 1152 832ZM1664 1664C1664 1630 1650 1597 1627 1574L1284 1231C1365 1114 1408 974 1408 832C1408 443 1093 128 704 128C315 128 0 443 0 832C0 1221 315 1536 704 1536C846 1536 986 1493 1103 1412L1446 1754C1469 1778 1502 1792 1536 1792C1606 1792 1664 1734 1664 1664Z"/></svg>
<span class="t " id="filt" style="left:212.3px;top:567px;font-size:16.8px;color:#9a9a9a;transform:scaleX(1.0382);">Filtre aqui</span>
<div class="bx" style="left:164px;top:599px;width:1771px;height:59.6px;background:#f5f5f5;border-bottom:1px solid #d4d4d4"></div>
<div class="bx" style="left:164px;top:658.6px;width:1771px;height:38.4px;background:#fdf6e5"></div>
<span class="t " id="h0_0" style="left:247.45px;top:619.6px;font-size:16.5px;color:#3b3b3b;transform-origin:50% 50%;margin-left:-500px;width:1000px;text-align:center;transform:scaleX(1.0022);">Código do SKU</span>
<div class="bx" style="left:330.9px;top:600px;width:1px;height:57.5px;background:#d4d4d4"></div>
<span class="t " id="h1_0" style="left:484.34999999999997px;top:619.6px;font-size:16.5px;color:#3b3b3b;transform-origin:50% 50%;margin-left:-500px;width:1000px;text-align:center;transform:scaleX(0.9017);">SKU</span>
<div class="bx" style="left:636.8px;top:600px;width:1px;height:57.5px;background:#d4d4d4"></div>
<span class="t " id="h2_0" style="left:699.65px;top:619.6px;font-size:16.5px;color:#3b3b3b;transform-origin:50% 50%;margin-left:-500px;width:1000px;text-align:center;transform:scaleX(1.0536);">Volume</span>
<span class="t " id="c2" style="right:1266.3px;top:669.8px;font-size:16.25px;color:#5a5a5a;transform-origin:100% 50%;">0</span>
<div class="bx" style="left:761.5px;top:600px;width:1px;height:57.5px;background:#d4d4d4"></div>
<span class="t " id="h3_0" style="left:824.5px;top:619.6px;font-size:16.5px;color:#3b3b3b;transform-origin:50% 50%;margin-left:-500px;width:1000px;text-align:center;transform:scaleX(1.0665);">Quantidade</span>
<span class="t " id="c3" style="right:1141.3px;top:669.8px;font-size:16.25px;color:#5a5a5a;transform-origin:100% 50%;">0</span>
<div class="bx" style="left:886.5px;top:600px;width:1px;height:57.5px;background:#d4d4d4"></div>
<span class="t " id="h4_0" style="left:949.65px;top:619.6px;font-size:16.5px;color:#3b3b3b;transform-origin:50% 50%;margin-left:-500px;width:1000px;text-align:center;transform:scaleX(1.0878);">Valor Unitário</span>
<span class="t " id="c4" style="right:1016.0px;top:669.8px;font-size:16.25px;color:#5a5a5a;transform-origin:100% 50%;">0,00</span>
<div class="bx" style="left:1011.8px;top:600px;width:1px;height:57.5px;background:#d4d4d4"></div>
<span class="t " id="h5_0" style="left:1074.9px;top:619.6px;font-size:16.5px;color:#3b3b3b;transform-origin:50% 50%;margin-left:-500px;width:1000px;text-align:center;transform:scaleX(1.0859);">Valor Total</span>
<span class="t " id="c5" style="right:890.8px;top:669.8px;font-size:16.25px;color:#5a5a5a;transform-origin:100% 50%;">0,00</span>
<div class="bx" style="left:1137.0px;top:600px;width:1px;height:57.5px;background:#d4d4d4"></div>
<span class="t " id="h6_0" style="left:1200.05px;top:607.9px;font-size:16.5px;color:#3b3b3b;transform-origin:50% 50%;margin-left:-500px;width:1000px;text-align:center;transform:scaleX(1.0559);">Valor de</span>
<span class="t " id="h6_1" style="left:1200.05px;top:631.4px;font-size:16.5px;color:#3b3b3b;transform-origin:50% 50%;margin-left:-500px;width:1000px;text-align:center;transform:scaleX(1.0413);">Desconto</span>
<span class="t " id="c6" style="right:765.7px;top:669.8px;font-size:16.25px;color:#5a5a5a;transform-origin:100% 50%;">0,00</span>
<div class="bx" style="left:1262.1px;top:600px;width:1px;height:57.5px;background:#d4d4d4"></div>
<span class="t " id="h7_0" style="left:1346.05px;top:607.9px;font-size:16.5px;color:#3b3b3b;transform-origin:50% 50%;margin-left:-500px;width:1000px;text-align:center;transform:scaleX(1.0555);">Valor de Desconto</span>
<span class="t " id="h7_1" style="left:1346.05px;top:631.4px;font-size:16.5px;color:#3b3b3b;transform-origin:50% 50%;margin-left:-500px;width:1000px;text-align:center;transform:scaleX(1.0098);">Rateado</span>
<span class="t " id="c7" style="right:598.8px;top:669.8px;font-size:16.25px;color:#5a5a5a;transform-origin:100% 50%;">0,00</span>
<div class="bx" style="left:1429.0px;top:600px;width:1px;height:57.5px;background:#d4d4d4"></div>
<span class="t " id="h8_0" style="left:1492.0px;top:607.9px;font-size:16.5px;color:#3b3b3b;transform-origin:50% 50%;margin-left:-500px;width:1000px;text-align:center;transform:scaleX(1.0625);">Valor de</span>
<span class="t " id="h8_1" style="left:1492.0px;top:631.4px;font-size:16.5px;color:#3b3b3b;transform-origin:50% 50%;margin-left:-500px;width:1000px;text-align:center;transform:scaleX(1.0388);">Acréscimo</span>
<span class="t " id="c8" style="right:473.79999999999995px;top:669.8px;font-size:16.25px;color:#5a5a5a;transform-origin:100% 50%;">0,00</span>
<div class="bx" style="left:1554.0px;top:600px;width:1px;height:57.5px;background:#d4d4d4"></div>
<span class="t " id="h9_0" style="left:1637.95px;top:607.9px;font-size:16.5px;color:#3b3b3b;transform-origin:50% 50%;margin-left:-500px;width:1000px;text-align:center;transform:scaleX(1.0559);">Valor de Acréscimo</span>
<span class="t " id="h9_1" style="left:1637.95px;top:631.4px;font-size:16.5px;color:#3b3b3b;transform-origin:50% 50%;margin-left:-500px;width:1000px;text-align:center;transform:scaleX(1.0098);">Rateado</span>
<span class="t " id="c9" style="right:306.89999999999986px;top:669.8px;font-size:16.25px;color:#5a5a5a;transform-origin:100% 50%;">0,00</span>
<div class="bx" style="left:1720.9px;top:600px;width:1px;height:57.5px;background:#d4d4d4"></div>
<span class="t " id="h10_0" style="left:1790.7px;top:607.9px;font-size:16.5px;color:#3b3b3b;transform-origin:50% 50%;margin-left:-500px;width:1000px;text-align:center;transform:scaleX(1.0404);">Valor de Frete</span>
<span class="t " id="h10_1" style="left:1790.7px;top:631.4px;font-size:16.5px;color:#3b3b3b;transform-origin:50% 50%;margin-left:-500px;width:1000px;text-align:center;transform:scaleX(1.0098);">Rateado</span>
<span class="t " id="c10" style="right:168.29999999999995px;top:669.8px;font-size:16.25px;color:#5a5a5a;transform-origin:100% 50%;">0,00</span>
<div class="bx" style="left:1859.5px;top:600px;width:1px;height:57.5px;background:#d4d4d4"></div>
<div class="bx" style="left:1861px;top:600px;width:74px;height:96px;overflow:hidden"><span class="t" id="hlast" style="left:19.5px;top:20px;font-size:16.5px;color:#3b3b3b;transform:scaleX(1.06)">Valor Pago</span><span class="t" id="clast" style="left:63px;top:69.5px;font-size:16.25px;color:#5a5a5a">0,00</span></div>
<div class="bx" style="left:164px;top:994.6px;width:1771px;height:18.6px;background:#f1f1f1"></div>
<div class="bx" style="left:188px;top:994.6px;width:569.5px;height:18.6px;background:#c1c1c1"></div>
<svg class="ic" style="left:172px;top:999.5px;width:6px;height:11px" viewBox="0 0 6 11"><path d="M6 0 L0 5.5 L6 11Z" fill="#a3a3a3"/></svg>
<svg class="ic" style="left:1920.5px;top:999.5px;width:6px;height:11px" viewBox="0 0 6 11"><path d="M0 0 L6 5.5 L0 11Z" fill="#505050"/></svg>
</body></html>
